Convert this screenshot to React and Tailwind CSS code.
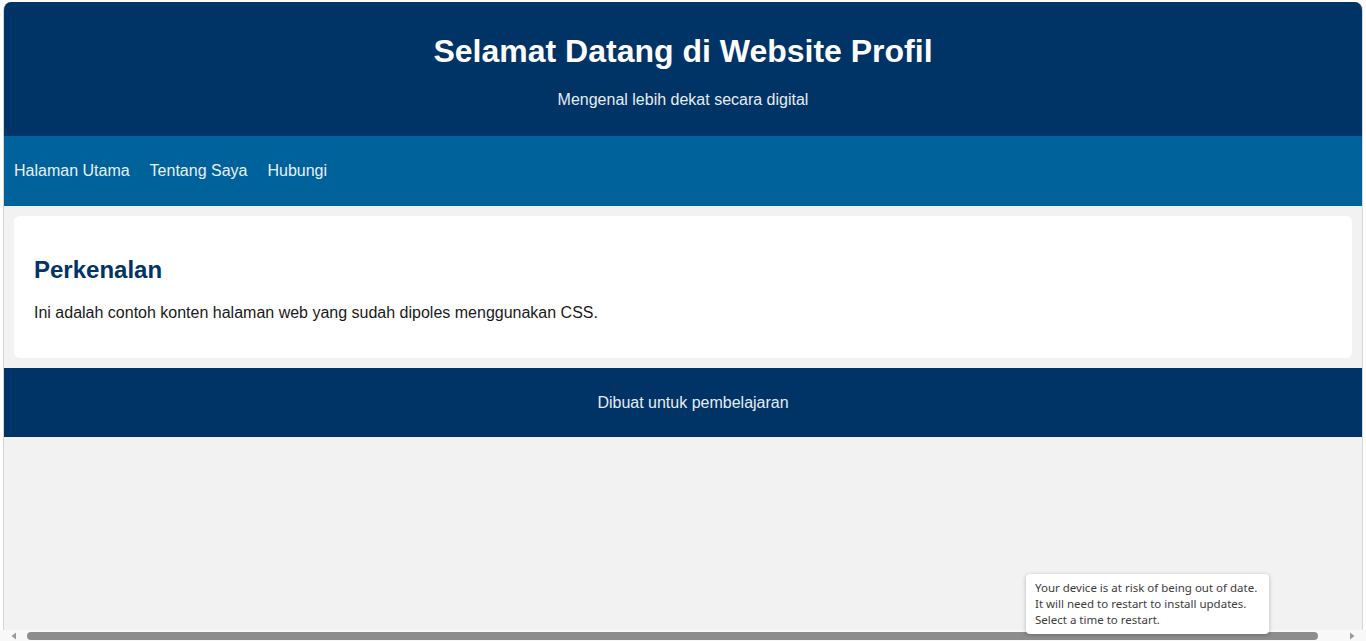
export default function App() {
  return (
    <div className="relative h-[641px] w-full overflow-hidden bg-white" style={{ fontFamily: '"Liberation Sans", Arial, sans-serif' }}>
      <div className="flex h-[630px] flex-col pl-[3px] pr-[3px] pt-[2px]">
        <div className="flex flex-1 flex-col overflow-hidden rounded-t-[8px] border-l border-r border-[#d6d6d6] bg-[#f2f2f2]">
          <header className="bg-[#003366] px-5 pb-[11px] pt-[10px] text-center text-white">
            <h1 className="my-[21px] text-[32px] font-bold leading-[37px]">Selamat Datang di Website Profil</h1>
            <p className="my-4 text-[16px] leading-[18px] text-[#e6ecf3]">Mengenal lebih dekat secara digital</p>
          </header>
          <nav className="flex h-[70px] items-center gap-5 bg-[#00629b] px-[10px] text-[16px] leading-[18px] text-[#e8f0f6]">
            <a>Halaman Utama</a>
            <a>Tentang Saya</a>
            <a>Hubungi</a>
          </nav>
          <main className="m-[10px] rounded-[6px] bg-white px-5 py-5">
            <h2 className="my-5 text-[24px] font-bold leading-[28px] text-[#003366]">Perkenalan</h2>
            <p className="my-4 text-[16px] leading-[18px] text-[#1a1a1a]">Ini adalah contoh konten halaman web yang sudah dipoles menggunakan CSS.</p>
          </main>
          <footer className="flex h-[69px] items-center justify-center bg-[#003366] pl-5 pt-[1px] text-[16px] leading-[18px] text-[#e6ecf3]">
            Dibuat untuk pembelajaran
          </footer>
        </div>
      </div>
      <div className="flex h-[11px] items-center bg-[#f8f8f8] pl-[10px] pr-[10px]">
        <svg width="8" height="8" viewBox="0 0 8 8"><path d="M6 0.5 L1.5 4 L6 7.5 Z" fill="#9a9a9a" /></svg>
        <div className="ml-[9px] mr-[30px] h-[8px] flex-1 rounded-full bg-[#8d8d8d]" />
        <svg width="8" height="8" viewBox="0 0 8 8"><path d="M2 0.5 L6.5 4 L2 7.5 Z" fill="#9a9a9a" /></svg>
      </div>
      <div
        className="absolute left-[1026px] top-[574px] w-[243px] rounded-[4px] bg-white px-[9px] py-[6px] text-[11.5px] leading-[16px] text-[#3c3c3c] shadow-[0_1px_4px_rgba(0,0,0,0.25)]"
        style={{ fontFamily: '"Noto Sans", "Open Sans", sans-serif' }}
      >
        <div className="whitespace-nowrap">Your device is at risk of being out of date.</div>
        <div className="whitespace-nowrap">It will need to restart to install updates.</div>
        <div className="whitespace-nowrap">Select a time to restart.</div>
      </div>
    </div>
  );
}
